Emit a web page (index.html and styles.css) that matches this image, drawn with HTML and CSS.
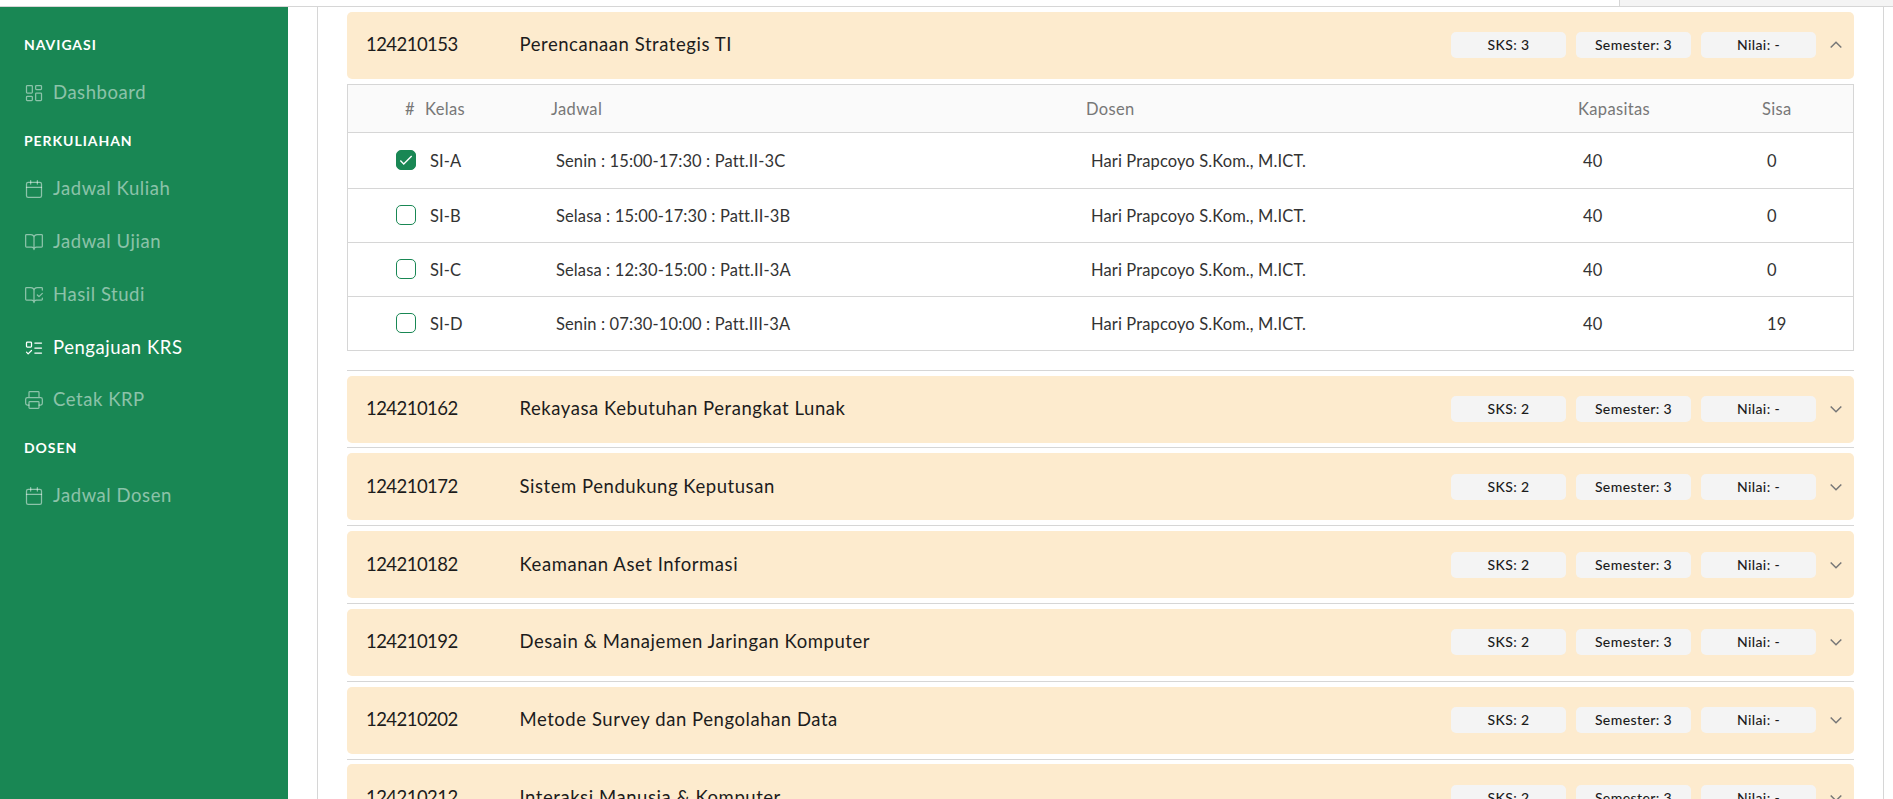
FILE: index.html
```html
<!DOCTYPE html>
<html lang="id">
<head>
<meta charset="utf-8">
<title>Pengajuan KRS</title>
<link rel="stylesheet" href="styles.css">
</head>
<body>
<header class="topbar"><div class="topbar-main"></div><div class="topbar-side"></div></header>
<div class="layout">
<nav class="sidebar">
  <h6 class="nav-title">Navigasi</h6>
  <a class="nav-link dashboard"><svg class="icon" viewBox="0 0 24 24"><rect x="3" y="3" width="7" height="9" rx="1"/><rect x="14" y="3" width="7" height="5" rx="1"/><rect x="14" y="12" width="7" height="9" rx="1"/><rect x="3" y="16" width="7" height="5" rx="1"/></svg><span>Dashboard</span></a>
  <h6 class="nav-title">Perkuliahan</h6>
  <a class="nav-link"><svg class="icon" viewBox="0 0 24 24"><path d="M8 2v4M16 2v4M3 10h18"/><rect x="3" y="4" width="18" height="18" rx="2"/></svg><span>Jadwal Kuliah</span></a>
  <a class="nav-link"><svg class="icon" viewBox="0 0 24 24"><path d="M12 7v14M3 18a1 1 0 0 1-1-1V4a1 1 0 0 1 1-1h5a4 4 0 0 1 4 4 4 4 0 0 1 4-4h5a1 1 0 0 1 1 1v13a1 1 0 0 1-1 1h-6a3 3 0 0 0-3 3 3 3 0 0 0-3-3z"/></svg><span>Jadwal Ujian</span></a>
  <a class="nav-link"><svg class="icon" viewBox="0 0 24 24"><path d="M12 21V7M16 12l2 2 4-4M22 6V4a1 1 0 0 0-1-1h-5a4 4 0 0 0-4 4 4 4 0 0 0-4-4H3a1 1 0 0 0-1 1v13a1 1 0 0 0 1 1h6a3 3 0 0 1 3 3 3 3 0 0 1 3-3h6a1 1 0 0 0 1-1v-1.3"/></svg><span>Hasil Studi</span></a>
  <a class="nav-link active"><svg class="icon" viewBox="0 0 24 24"><rect x="3" y="5" width="6" height="6" rx="1"/><path d="m3 17 2 2 4-4M13 6h8M13 12h8M13 18h8"/></svg><span>Pengajuan KRS</span></a>
  <a class="nav-link"><svg class="icon" viewBox="0 0 24 24"><path d="M6 18H4a2 2 0 0 1-2-2v-5a2 2 0 0 1 2-2h16a2 2 0 0 1 2 2v5a2 2 0 0 1-2 2h-2M6 9V3a1 1 0 0 1 1-1h10a1 1 0 0 1 1 1v6"/><rect x="6" y="14" width="12" height="8" rx="1"/></svg><span>Cetak KRP</span></a>
  <h6 class="nav-title">Dosen</h6>
  <a class="nav-link"><svg class="icon" viewBox="0 0 24 24"><path d="M8 2v4M16 2v4M3 10h18"/><rect x="3" y="4" width="18" height="18" rx="2"/></svg><span>Jadwal Dosen</span></a>
</nav>
<main class="card">
  <section class="course open">
    <div class="course-head"><span class="code">124210153</span><span class="name">Perencanaan Strategis TI</span><span class="badge">SKS: 3</span><span class="badge">Semester: 3</span><span class="badge">Nilai: -</span><svg class="chevron" viewBox="0 0 12 8"><path d="M.7 6.5 6 1.3l5.3 5.2"/></svg></div>
    <div class="classes">
      <div class="row head"><span class="num">#</span><span>Kelas</span><span>Jadwal</span><span>Dosen</span><span>Kapasitas</span><span>Sisa</span></div>
      <div class="row first"><span class="check checked"><svg viewBox="0 0 20 20"><path d="m3.7 10.6 3.8 3.9 8.8-9"/></svg></span><span>SI-A</span><span>Senin : 15:00-17:30 : Patt.II-3C</span><span class="lecturer">Hari Prapcoyo S.Kom., M.ICT.</span><span>40</span><span>0</span></div>
      <div class="row"><span class="check"></span><span>SI-B</span><span>Selasa : 15:00-17:30 : Patt.II-3B</span><span class="lecturer">Hari Prapcoyo S.Kom., M.ICT.</span><span>40</span><span>0</span></div>
      <div class="row"><span class="check"></span><span>SI-C</span><span>Selasa : 12:30-15:00 : Patt.II-3A</span><span class="lecturer">Hari Prapcoyo S.Kom., M.ICT.</span><span>40</span><span>0</span></div>
      <div class="row"><span class="check"></span><span>SI-D</span><span>Senin : 07:30-10:00 : Patt.III-3A</span><span class="lecturer">Hari Prapcoyo S.Kom., M.ICT.</span><span>40</span><span>19</span></div>
    </div>
  </section>
  <section class="course"><div class="course-head"><span class="code">124210162</span><span class="name">Rekayasa Kebutuhan Perangkat Lunak</span><span class="badge">SKS: 2</span><span class="badge">Semester: 3</span><span class="badge">Nilai: -</span><svg class="chevron" viewBox="0 0 12 8"><path d="M.7 1.5 6 6.7l5.3-5.2"/></svg></div></section>
  <section class="course"><div class="course-head"><span class="code">124210172</span><span class="name">Sistem Pendukung Keputusan</span><span class="badge">SKS: 2</span><span class="badge">Semester: 3</span><span class="badge">Nilai: -</span><svg class="chevron" viewBox="0 0 12 8"><path d="M.7 1.5 6 6.7l5.3-5.2"/></svg></div></section>
  <section class="course"><div class="course-head"><span class="code">124210182</span><span class="name">Keamanan Aset Informasi</span><span class="badge">SKS: 2</span><span class="badge">Semester: 3</span><span class="badge">Nilai: -</span><svg class="chevron" viewBox="0 0 12 8"><path d="M.7 1.5 6 6.7l5.3-5.2"/></svg></div></section>
  <section class="course"><div class="course-head"><span class="code">124210192</span><span class="name">Desain &amp; Manajemen Jaringan Komputer</span><span class="badge">SKS: 2</span><span class="badge">Semester: 3</span><span class="badge">Nilai: -</span><svg class="chevron" viewBox="0 0 12 8"><path d="M.7 1.5 6 6.7l5.3-5.2"/></svg></div></section>
  <section class="course"><div class="course-head"><span class="code">124210202</span><span class="name">Metode Survey dan Pengolahan Data</span><span class="badge">SKS: 2</span><span class="badge">Semester: 3</span><span class="badge">Nilai: -</span><svg class="chevron" viewBox="0 0 12 8"><path d="M.7 1.5 6 6.7l5.3-5.2"/></svg></div></section>
  <section class="course"><div class="course-head"><span class="code">124210212</span><span class="name">Interaksi Manusia &amp; Komputer</span><span class="badge">SKS: 2</span><span class="badge">Semester: 3</span><span class="badge">Nilai: -</span><svg class="chevron" viewBox="0 0 12 8"><path d="M.7 1.5 6 6.7l5.3-5.2"/></svg></div></section>
</main>
</div>
</body>
</html>
```
FILE: styles.css
```css
:root {
  --green: #198754;
  --line: #d6d6d6;
}
* { box-sizing: border-box; }
body {
  margin: 0;
  height: 100vh;
  overflow: hidden;
  display: flex;
  flex-direction: column;
  background: #fff;
  color: #1c1c1c;
  font-family: Lato, "Open Sans", sans-serif;
}
.topbar {
  flex: none;
  height: 7px;
  display: flex;
  border-bottom: 1px solid var(--line);
}
.topbar-main { width: 1619px; }
.topbar-side { flex: 1; background: #f4f4f4; border-left: 1px solid var(--line); }
.layout { flex: 1; min-height: 0; display: flex; overflow: hidden; }

.sidebar { width: 288px; flex: none; background: var(--green); padding: 16px 24px; }
.nav-title {
  margin: 0;
  height: 43px;
  line-height: 43px;
  font-size: 14px;
  font-weight: 700;
  letter-spacing: .95px;
  text-transform: uppercase;
  color: #fff;
}
.nav-link {
  display: flex;
  align-items: center;
  gap: 9px;
  height: 52.8px;
  font-size: 18.5px;
  letter-spacing: .55px;
  color: rgba(255, 255, 255, .5);
}
.nav-link.active { color: #fff; }
.icon {
  width: 20px;
  height: 20px;
  margin-top: 2px;
  fill: none;
  stroke: currentColor;
  stroke-width: 1.5;
  stroke-linecap: round;
  stroke-linejoin: round;
}

.card {
  width: 1567px;
  height: 1000px;
  margin-left: 29px;
  padding: 0 29px;
  border: 1px solid var(--line);
  border-width: 0 1px;
}
.course { height: 77.79px; padding-top: 4.88px; border-top: 1px solid var(--line); }
.course.open { height: 362.65px; padding-top: 4.5px; border-top: 0; }
.course-head {
  height: 67px;
  display: flex;
  align-items: center;
  gap: 10px;
  padding: 0 12px 0 19px;
  border-radius: 5px;
  background: #fdebce;
  font-size: 18.5px;
}
.code { width: 143.5px; padding-bottom: 2px; letter-spacing: -.55px; }
.name { flex: 1; padding-bottom: 2px; letter-spacing: .55px; }
.badge {
  width: 115px;
  height: 26px;
  line-height: 25px;
  border-radius: 5px;
  background: #f4f4f4;
  text-align: center;
  font-size: 14px;
  font-weight: 500;
  letter-spacing: .4px;
}
.chevron {
  flex: none;
  width: 12px;
  height: 8px;
  margin-left: 3.5px;
  margin-right: .5px;
  fill: none;
  stroke: #777;
  stroke-width: 1.5;
}

.classes { margin-top: 5.5px; border: 1px solid var(--line); font-size: 16.5px; letter-spacing: .12px; }
.row {
  display: grid;
  grid-template-columns: 82px 126px 535px 492px 184px 1fr;
  align-items: center;
  height: 54px;
  border-top: 1px solid var(--line);
  font-weight: 400;
  color: #333;
}
.row.first { height: 56px; }
.row.head {
  grid-template-columns: 77px 126px 535px 492px 184px 1fr;
  height: 47px;
  border-top: 0;
  background: #fafafa;
  color: #777;
  letter-spacing: .35px;
}
.row .num { padding-left: 57px; }
.check {
  width: 20px;
  height: 20px;
  margin-left: 48px;
  margin-bottom: 2px;
  border: 1px solid var(--green);
  border-radius: 5px;
}
.check.checked { background: var(--green); }
.check svg { display: block; width: 18px; height: 18px; fill: none; stroke: #fff; stroke-width: 1.5; }
```
